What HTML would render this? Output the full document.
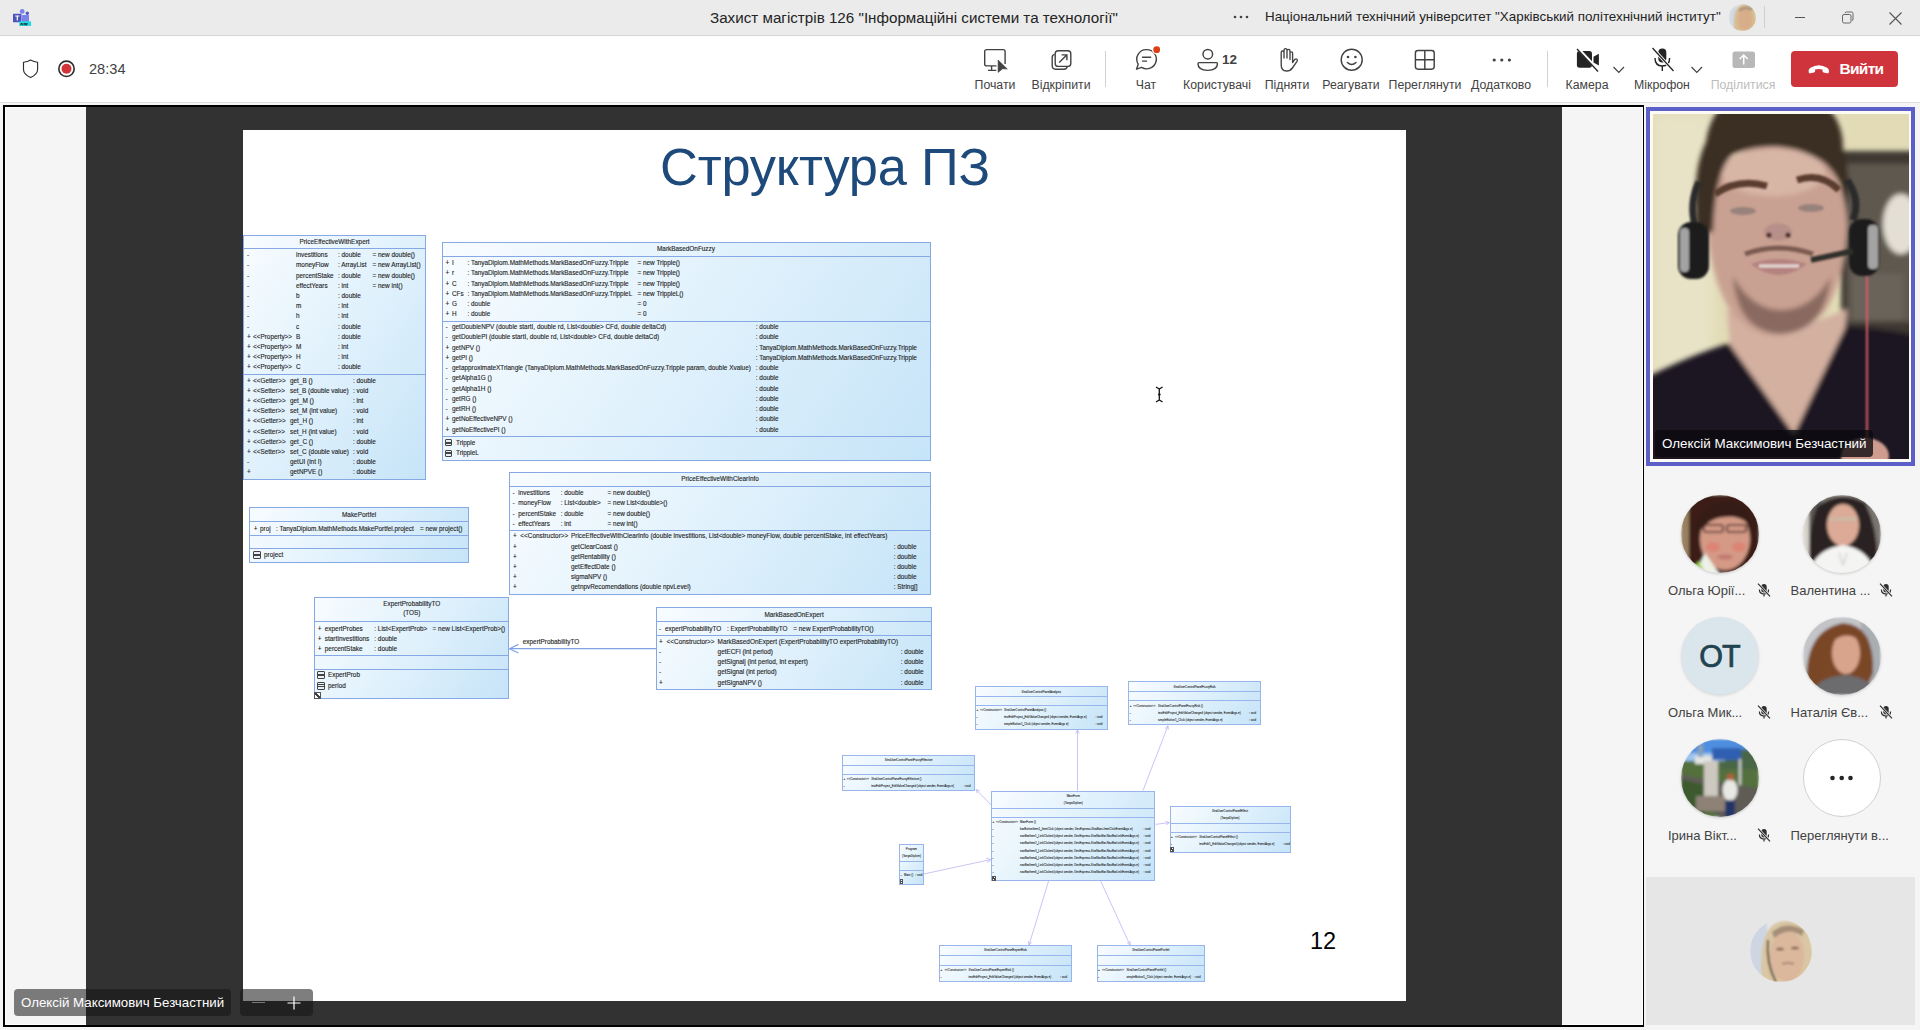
<!DOCTYPE html>
<html><head><meta charset="utf-8"><style>
*{margin:0;padding:0;box-sizing:border-box}
html,body{width:1920px;height:1030px;overflow:hidden;background:#f5f5f5;font-family:"Liberation Sans",sans-serif;position:relative}
.abs{position:absolute}
#titlebar{left:0;top:0;width:1920px;height:36px;background:#ebebeb;border-bottom:1px solid #d6d6d6}
#toolbar{left:0;top:36px;width:1920px;height:67px;background:#fff;border-bottom:1px solid #e0e0e0}
#stage{left:3px;top:105px;width:1641px;height:922px;background:#000}
#stageIn{left:5px;top:107px;width:1638px;height:918px;background:#fff}
#shareBg{left:6px;top:108px;width:1636px;height:916px;background:#f5f5f5}
#dark{left:86px;top:107px;width:1476px;height:918px;background:#323232}
#slide{left:243px;top:129.5px;width:1162.5px;height:871px;background:#fff}
.ub{position:absolute;border:1px solid #86a9e6;background:linear-gradient(125deg,#f8fcff 0%,#e2f2fc 45%,#c6e4f8 100%)}
.us{position:absolute;height:1px;background:#86a9e6}
.ut{position:absolute;white-space:nowrap;line-height:10px;height:10px;color:#1e1e1e;-webkit-text-stroke:0.12px #1e1e1e}
.sm{-webkit-text-stroke:0.07px #222;color:#222}
.ctr{text-align:center}
.nic{position:absolute;border:1px solid #444;border-radius:1px;background:linear-gradient(#444 0 0) 0 33%/100% 1px no-repeat,linear-gradient(#444 0 0) 0 66%/100% 1px no-repeat,#e8f0f6}
.shc{position:absolute;border:0.7px solid #555;background:linear-gradient(45deg,#fff 38%,#444 38%,#444 62%,#fff 62%)}
.tb{position:absolute;font-size:12.3px;color:#424242;white-space:nowrap;line-height:14px}
.lbl{position:absolute;font-size:13px;color:#424242;white-space:nowrap;line-height:16px}
</style></head><body>
<div id="titlebar" class="abs"></div>
<div id="toolbar" class="abs"></div>
<div id="stage" class="abs"></div><div id="stageIn" class="abs"></div><div id="shareBg" class="abs"></div><div id="dark" class="abs"></div><div id="slide" class="abs"></div>
<div class="abs" style="left:660px;top:138.5px;font-size:52.4px;line-height:56px;color:#1d497b;white-space:nowrap;letter-spacing:-0.2px">Структура ПЗ</div>
<div class="abs" style="left:1310px;top:928px;font-size:23.5px;line-height:26px;color:#000;white-space:nowrap">12</div>
<div class="ub" style="left:243.0px;top:234.5px;width:183.0px;height:245.5px"></div>
<div class="us" style="left:243.0px;top:247.8px;width:183.0px"></div>
<div class="us" style="left:243.0px;top:374.0px;width:183.0px"></div>
<div class="ut ctr" style="left:134.5px;top:236.5px;width:400px;font-size:6.4px">PriceEffectiveWithExpert</div>
<div class="ut" style="left:247.0px;top:250.2px;font-size:6.4px">-</div>
<div class="ut" style="left:296.0px;top:250.2px;font-size:6.4px">investitions</div>
<div class="ut" style="left:338.0px;top:250.2px;font-size:6.4px">: double</div>
<div class="ut" style="left:372.5px;top:250.2px;font-size:6.4px">= new double()</div>
<div class="ut" style="left:247.0px;top:260.4px;font-size:6.4px">-</div>
<div class="ut" style="left:296.0px;top:260.4px;font-size:6.4px">moneyFlow</div>
<div class="ut" style="left:338.0px;top:260.4px;font-size:6.4px">: ArrayList</div>
<div class="ut" style="left:372.5px;top:260.4px;font-size:6.4px">= new ArrayList()</div>
<div class="ut" style="left:247.0px;top:270.6px;font-size:6.4px">-</div>
<div class="ut" style="left:296.0px;top:270.6px;font-size:6.4px">percentStake</div>
<div class="ut" style="left:338.0px;top:270.6px;font-size:6.4px">: double</div>
<div class="ut" style="left:372.5px;top:270.6px;font-size:6.4px">= new double()</div>
<div class="ut" style="left:247.0px;top:280.8px;font-size:6.4px">-</div>
<div class="ut" style="left:296.0px;top:280.8px;font-size:6.4px">effectYears</div>
<div class="ut" style="left:338.0px;top:280.8px;font-size:6.4px">: int</div>
<div class="ut" style="left:372.5px;top:280.8px;font-size:6.4px">= new int()</div>
<div class="ut" style="left:247.0px;top:291.0px;font-size:6.4px">-</div>
<div class="ut" style="left:296.0px;top:291.0px;font-size:6.4px">b</div>
<div class="ut" style="left:338.0px;top:291.0px;font-size:6.4px">: double</div>
<div class="ut" style="left:247.0px;top:301.2px;font-size:6.4px">-</div>
<div class="ut" style="left:296.0px;top:301.2px;font-size:6.4px">m</div>
<div class="ut" style="left:338.0px;top:301.2px;font-size:6.4px">: int</div>
<div class="ut" style="left:247.0px;top:311.4px;font-size:6.4px">-</div>
<div class="ut" style="left:296.0px;top:311.4px;font-size:6.4px">h</div>
<div class="ut" style="left:338.0px;top:311.4px;font-size:6.4px">: int</div>
<div class="ut" style="left:247.0px;top:321.6px;font-size:6.4px">-</div>
<div class="ut" style="left:296.0px;top:321.6px;font-size:6.4px">c</div>
<div class="ut" style="left:338.0px;top:321.6px;font-size:6.4px">: double</div>
<div class="ut" style="left:247.0px;top:331.8px;font-size:6.4px">+</div>
<div class="ut" style="left:253.0px;top:331.8px;font-size:6.4px">&lt;&lt;Property&gt;&gt;</div>
<div class="ut" style="left:296.0px;top:331.8px;font-size:6.4px">B</div>
<div class="ut" style="left:338.0px;top:331.8px;font-size:6.4px">: double</div>
<div class="ut" style="left:247.0px;top:342.0px;font-size:6.4px">+</div>
<div class="ut" style="left:253.0px;top:342.0px;font-size:6.4px">&lt;&lt;Property&gt;&gt;</div>
<div class="ut" style="left:296.0px;top:342.0px;font-size:6.4px">M</div>
<div class="ut" style="left:338.0px;top:342.0px;font-size:6.4px">: int</div>
<div class="ut" style="left:247.0px;top:352.2px;font-size:6.4px">+</div>
<div class="ut" style="left:253.0px;top:352.2px;font-size:6.4px">&lt;&lt;Property&gt;&gt;</div>
<div class="ut" style="left:296.0px;top:352.2px;font-size:6.4px">H</div>
<div class="ut" style="left:338.0px;top:352.2px;font-size:6.4px">: int</div>
<div class="ut" style="left:247.0px;top:362.4px;font-size:6.4px">+</div>
<div class="ut" style="left:253.0px;top:362.4px;font-size:6.4px">&lt;&lt;Property&gt;&gt;</div>
<div class="ut" style="left:296.0px;top:362.4px;font-size:6.4px">C</div>
<div class="ut" style="left:338.0px;top:362.4px;font-size:6.4px">: double</div>
<div class="ut" style="left:247.0px;top:375.8px;font-size:6.4px">+</div>
<div class="ut" style="left:253.0px;top:375.8px;font-size:6.4px">&lt;&lt;Getter&gt;&gt;</div>
<div class="ut" style="left:290.0px;top:375.8px;font-size:6.4px">get_B ()</div>
<div class="ut" style="left:353.0px;top:375.8px;font-size:6.4px">: double</div>
<div class="ut" style="left:247.0px;top:385.9px;font-size:6.4px">+</div>
<div class="ut" style="left:253.0px;top:385.9px;font-size:6.4px">&lt;&lt;Setter&gt;&gt;</div>
<div class="ut" style="left:290.0px;top:385.9px;font-size:6.4px">set_B (double value)</div>
<div class="ut" style="left:353.0px;top:385.9px;font-size:6.4px">: void</div>
<div class="ut" style="left:247.0px;top:396.1px;font-size:6.4px">+</div>
<div class="ut" style="left:253.0px;top:396.1px;font-size:6.4px">&lt;&lt;Getter&gt;&gt;</div>
<div class="ut" style="left:290.0px;top:396.1px;font-size:6.4px">get_M ()</div>
<div class="ut" style="left:353.0px;top:396.1px;font-size:6.4px">: int</div>
<div class="ut" style="left:247.0px;top:406.2px;font-size:6.4px">+</div>
<div class="ut" style="left:253.0px;top:406.2px;font-size:6.4px">&lt;&lt;Setter&gt;&gt;</div>
<div class="ut" style="left:290.0px;top:406.2px;font-size:6.4px">set_M (int value)</div>
<div class="ut" style="left:353.0px;top:406.2px;font-size:6.4px">: void</div>
<div class="ut" style="left:247.0px;top:416.4px;font-size:6.4px">+</div>
<div class="ut" style="left:253.0px;top:416.4px;font-size:6.4px">&lt;&lt;Getter&gt;&gt;</div>
<div class="ut" style="left:290.0px;top:416.4px;font-size:6.4px">get_H ()</div>
<div class="ut" style="left:353.0px;top:416.4px;font-size:6.4px">: int</div>
<div class="ut" style="left:247.0px;top:426.6px;font-size:6.4px">+</div>
<div class="ut" style="left:253.0px;top:426.6px;font-size:6.4px">&lt;&lt;Setter&gt;&gt;</div>
<div class="ut" style="left:290.0px;top:426.6px;font-size:6.4px">set_H (int value)</div>
<div class="ut" style="left:353.0px;top:426.6px;font-size:6.4px">: void</div>
<div class="ut" style="left:247.0px;top:436.7px;font-size:6.4px">+</div>
<div class="ut" style="left:253.0px;top:436.7px;font-size:6.4px">&lt;&lt;Getter&gt;&gt;</div>
<div class="ut" style="left:290.0px;top:436.7px;font-size:6.4px">get_C ()</div>
<div class="ut" style="left:353.0px;top:436.7px;font-size:6.4px">: double</div>
<div class="ut" style="left:247.0px;top:446.9px;font-size:6.4px">+</div>
<div class="ut" style="left:253.0px;top:446.9px;font-size:6.4px">&lt;&lt;Setter&gt;&gt;</div>
<div class="ut" style="left:290.0px;top:446.9px;font-size:6.4px">set_C (double value)</div>
<div class="ut" style="left:353.0px;top:446.9px;font-size:6.4px">: void</div>
<div class="ut" style="left:247.0px;top:457.0px;font-size:6.4px">-</div>
<div class="ut" style="left:290.0px;top:457.0px;font-size:6.4px">getUI (int I)</div>
<div class="ut" style="left:353.0px;top:457.0px;font-size:6.4px">: double</div>
<div class="ut" style="left:247.0px;top:467.2px;font-size:6.4px">+</div>
<div class="ut" style="left:290.0px;top:467.2px;font-size:6.4px">getNPVE ()</div>
<div class="ut" style="left:353.0px;top:467.2px;font-size:6.4px">: double</div>
<div class="ub" style="left:441.5px;top:241.5px;width:489.0px;height:219.0px"></div>
<div class="us" style="left:441.5px;top:256.0px;width:489.0px"></div>
<div class="us" style="left:441.5px;top:320.5px;width:489.0px"></div>
<div class="us" style="left:441.5px;top:435.7px;width:489.0px"></div>
<div class="ut ctr" style="left:486.0px;top:243.5px;width:400px;font-size:6.4px">MarkBasedOnFuzzy</div>
<div class="ut" style="left:445.4px;top:258.0px;font-size:6.4px">+</div>
<div class="ut" style="left:452.0px;top:258.0px;font-size:6.4px">I</div>
<div class="ut" style="left:467.5px;top:258.0px;font-size:6.4px">: TanyaDiplom.MathMethods.MarkBasedOnFuzzy.Tripple</div>
<div class="ut" style="left:637.5px;top:258.0px;font-size:6.4px">= new Tripple()</div>
<div class="ut" style="left:445.4px;top:268.2px;font-size:6.4px">+</div>
<div class="ut" style="left:452.0px;top:268.2px;font-size:6.4px">r</div>
<div class="ut" style="left:467.5px;top:268.2px;font-size:6.4px">: TanyaDiplom.MathMethods.MarkBasedOnFuzzy.Tripple</div>
<div class="ut" style="left:637.5px;top:268.2px;font-size:6.4px">= new Tripple()</div>
<div class="ut" style="left:445.4px;top:278.5px;font-size:6.4px">+</div>
<div class="ut" style="left:452.0px;top:278.5px;font-size:6.4px">C</div>
<div class="ut" style="left:467.5px;top:278.5px;font-size:6.4px">: TanyaDiplom.MathMethods.MarkBasedOnFuzzy.Tripple</div>
<div class="ut" style="left:637.5px;top:278.5px;font-size:6.4px">= new Tripple()</div>
<div class="ut" style="left:445.4px;top:288.8px;font-size:6.4px">+</div>
<div class="ut" style="left:452.0px;top:288.8px;font-size:6.4px">CFs</div>
<div class="ut" style="left:467.5px;top:288.8px;font-size:6.4px">: TanyaDiplom.MathMethods.MarkBasedOnFuzzy.TrippleL</div>
<div class="ut" style="left:637.5px;top:288.8px;font-size:6.4px">= new TrippleL()</div>
<div class="ut" style="left:445.4px;top:299.0px;font-size:6.4px">+</div>
<div class="ut" style="left:452.0px;top:299.0px;font-size:6.4px">G</div>
<div class="ut" style="left:467.5px;top:299.0px;font-size:6.4px">: double</div>
<div class="ut" style="left:637.5px;top:299.0px;font-size:6.4px">= 0</div>
<div class="ut" style="left:445.4px;top:309.2px;font-size:6.4px">+</div>
<div class="ut" style="left:452.0px;top:309.2px;font-size:6.4px">H</div>
<div class="ut" style="left:467.5px;top:309.2px;font-size:6.4px">: double</div>
<div class="ut" style="left:637.5px;top:309.2px;font-size:6.4px">= 0</div>
<div class="ut" style="left:445.4px;top:322.0px;font-size:6.4px">-</div>
<div class="ut" style="left:452.0px;top:322.0px;font-size:6.4px">getDoubleNPV (double startI, double rd, List&lt;double&gt; CFd, double deltaCd)</div>
<div class="ut" style="left:755.8px;top:322.0px;font-size:6.4px">: double</div>
<div class="ut" style="left:445.4px;top:332.2px;font-size:6.4px">-</div>
<div class="ut" style="left:452.0px;top:332.2px;font-size:6.4px">getDoublePI (double startI, double rd, List&lt;double&gt; CFd, double deltaCd)</div>
<div class="ut" style="left:755.8px;top:332.2px;font-size:6.4px">: double</div>
<div class="ut" style="left:445.4px;top:342.5px;font-size:6.4px">+</div>
<div class="ut" style="left:452.0px;top:342.5px;font-size:6.4px">getNPV ()</div>
<div class="ut" style="left:755.8px;top:342.5px;font-size:6.4px">: TanyaDiplom.MathMethods.MarkBasedOnFuzzy.Tripple</div>
<div class="ut" style="left:445.4px;top:352.8px;font-size:6.4px">+</div>
<div class="ut" style="left:452.0px;top:352.8px;font-size:6.4px">getPI ()</div>
<div class="ut" style="left:755.8px;top:352.8px;font-size:6.4px">: TanyaDiplom.MathMethods.MarkBasedOnFuzzy.Tripple</div>
<div class="ut" style="left:445.4px;top:363.0px;font-size:6.4px">-</div>
<div class="ut" style="left:452.0px;top:363.0px;font-size:6.4px">getapproximateXTriangle (TanyaDiplom.MathMethods.MarkBasedOnFuzzy.Tripple param, double Xvalue)</div>
<div class="ut" style="left:755.8px;top:363.0px;font-size:6.4px">: double</div>
<div class="ut" style="left:445.4px;top:373.2px;font-size:6.4px">-</div>
<div class="ut" style="left:452.0px;top:373.2px;font-size:6.4px">getAlpha1G ()</div>
<div class="ut" style="left:755.8px;top:373.2px;font-size:6.4px">: double</div>
<div class="ut" style="left:445.4px;top:383.5px;font-size:6.4px">-</div>
<div class="ut" style="left:452.0px;top:383.5px;font-size:6.4px">getAlpha1H ()</div>
<div class="ut" style="left:755.8px;top:383.5px;font-size:6.4px">: double</div>
<div class="ut" style="left:445.4px;top:393.8px;font-size:6.4px">-</div>
<div class="ut" style="left:452.0px;top:393.8px;font-size:6.4px">getRG ()</div>
<div class="ut" style="left:755.8px;top:393.8px;font-size:6.4px">: double</div>
<div class="ut" style="left:445.4px;top:404.0px;font-size:6.4px">-</div>
<div class="ut" style="left:452.0px;top:404.0px;font-size:6.4px">getRH ()</div>
<div class="ut" style="left:755.8px;top:404.0px;font-size:6.4px">: double</div>
<div class="ut" style="left:445.4px;top:414.2px;font-size:6.4px">+</div>
<div class="ut" style="left:452.0px;top:414.2px;font-size:6.4px">getNoEffectiveNPV ()</div>
<div class="ut" style="left:755.8px;top:414.2px;font-size:6.4px">: double</div>
<div class="ut" style="left:445.4px;top:424.5px;font-size:6.4px">+</div>
<div class="ut" style="left:452.0px;top:424.5px;font-size:6.4px">getNoEffectivePI ()</div>
<div class="ut" style="left:755.8px;top:424.5px;font-size:6.4px">: double</div>
<div class="nic" style="left:445.0px;top:439.2px;width:7px;height:7px"></div>
<div class="ut" style="left:456.0px;top:437.7px;font-size:6.4px">Tripple</div>
<div class="nic" style="left:445.0px;top:449.7px;width:7px;height:7px"></div>
<div class="ut" style="left:456.0px;top:448.2px;font-size:6.4px">TrippleL</div>
<div class="ub" style="left:509.2px;top:471.6px;width:421.5px;height:123.4px"></div>
<div class="us" style="left:509.2px;top:485.9px;width:421.5px"></div>
<div class="us" style="left:509.2px;top:529.5px;width:421.5px"></div>
<div class="ut ctr" style="left:520.0px;top:474.0px;width:400px;font-size:6.4px">PriceEffectiveWithClearInfo</div>
<div class="ut" style="left:512.5px;top:488.1px;font-size:6.4px">-</div>
<div class="ut" style="left:518.3px;top:488.1px;font-size:6.4px">investitions</div>
<div class="ut" style="left:560.7px;top:488.1px;font-size:6.4px">: double</div>
<div class="ut" style="left:607.6px;top:488.1px;font-size:6.4px">= new double()</div>
<div class="ut" style="left:512.5px;top:498.3px;font-size:6.4px">-</div>
<div class="ut" style="left:518.3px;top:498.3px;font-size:6.4px">moneyFlow</div>
<div class="ut" style="left:560.7px;top:498.3px;font-size:6.4px">: List&lt;double&gt;</div>
<div class="ut" style="left:607.6px;top:498.3px;font-size:6.4px">= new List&lt;double&gt;()</div>
<div class="ut" style="left:512.5px;top:508.5px;font-size:6.4px">-</div>
<div class="ut" style="left:518.3px;top:508.5px;font-size:6.4px">percentStake</div>
<div class="ut" style="left:560.7px;top:508.5px;font-size:6.4px">: double</div>
<div class="ut" style="left:607.6px;top:508.5px;font-size:6.4px">= new double()</div>
<div class="ut" style="left:512.5px;top:518.7px;font-size:6.4px">-</div>
<div class="ut" style="left:518.3px;top:518.7px;font-size:6.4px">effectYears</div>
<div class="ut" style="left:560.7px;top:518.7px;font-size:6.4px">: int</div>
<div class="ut" style="left:607.6px;top:518.7px;font-size:6.4px">= new int()</div>
<div class="ut" style="left:513.0px;top:531.4px;font-size:6.4px">+</div>
<div class="ut" style="left:520.3px;top:531.4px;font-size:6.4px">&lt;&lt;Constructor&gt;&gt;</div>
<div class="ut" style="left:571.0px;top:531.4px;font-size:6.4px">PriceEffectiveWithClearInfo (double investitions, List&lt;double&gt; moneyFlow, double percentStake, int effectYears)</div>
<div class="ut" style="left:513.0px;top:541.6px;font-size:6.4px">+</div>
<div class="ut" style="left:571.0px;top:541.6px;font-size:6.4px">getClearCoast ()</div>
<div class="ut" style="left:893.7px;top:541.6px;font-size:6.4px">: double</div>
<div class="ut" style="left:513.0px;top:551.8px;font-size:6.4px">+</div>
<div class="ut" style="left:571.0px;top:551.8px;font-size:6.4px">getRentability ()</div>
<div class="ut" style="left:893.7px;top:551.8px;font-size:6.4px">: double</div>
<div class="ut" style="left:513.0px;top:561.9px;font-size:6.4px">+</div>
<div class="ut" style="left:571.0px;top:561.9px;font-size:6.4px">getEffectDate ()</div>
<div class="ut" style="left:893.7px;top:561.9px;font-size:6.4px">: double</div>
<div class="ut" style="left:513.0px;top:572.1px;font-size:6.4px">+</div>
<div class="ut" style="left:571.0px;top:572.1px;font-size:6.4px">sigmaNPV ()</div>
<div class="ut" style="left:893.7px;top:572.1px;font-size:6.4px">: double</div>
<div class="ut" style="left:513.0px;top:582.3px;font-size:6.4px">+</div>
<div class="ut" style="left:571.0px;top:582.3px;font-size:6.4px">getnpvRecomendations (double npvLevel)</div>
<div class="ut" style="left:893.7px;top:582.3px;font-size:6.4px">: String[]</div>
<div class="ub" style="left:249.4px;top:507.1px;width:219.3px;height:55.6px"></div>
<div class="us" style="left:249.4px;top:521.4px;width:219.3px"></div>
<div class="us" style="left:249.4px;top:534.8px;width:219.3px"></div>
<div class="us" style="left:249.4px;top:548.0px;width:219.3px"></div>
<div class="ut ctr" style="left:159.1px;top:509.5px;width:400px;font-size:6.4px">MakePortfel</div>
<div class="ut" style="left:253.8px;top:523.8px;font-size:6.4px">+</div>
<div class="ut" style="left:260.0px;top:523.8px;font-size:6.4px">proj</div>
<div class="ut" style="left:276.0px;top:523.8px;font-size:6.4px">: TanyaDiplom.MathMethods.MakePortfel.project</div>
<div class="ut" style="left:420.0px;top:523.8px;font-size:6.4px">= new project()</div>
<div class="nic" style="left:253.0px;top:551.0px;width:8px;height:8px"></div>
<div class="ut" style="left:264.0px;top:550.0px;font-size:6.4px">project</div>
<div class="ub" style="left:314.3px;top:597.0px;width:194.9px;height:102.0px"></div>
<div class="us" style="left:314.3px;top:621.2px;width:194.9px"></div>
<div class="us" style="left:314.3px;top:655.4px;width:194.9px"></div>
<div class="us" style="left:314.3px;top:668.5px;width:194.9px"></div>
<div class="ut ctr" style="left:211.8px;top:599.0px;width:400px;font-size:6.4px">ExpertProbabilityTO</div>
<div class="ut ctr" style="left:211.8px;top:608.3px;width:400px;font-size:6.4px">(TOS)</div>
<div class="ut" style="left:317.8px;top:623.5px;font-size:6.4px">+</div>
<div class="ut" style="left:324.8px;top:623.5px;font-size:6.4px">expertProbes</div>
<div class="ut" style="left:374.3px;top:623.5px;font-size:6.4px">: List&lt;ExpertProb&gt;</div>
<div class="ut" style="left:432.6px;top:623.5px;font-size:6.4px">= new List&lt;ExpertProb&gt;()</div>
<div class="ut" style="left:317.8px;top:633.7px;font-size:6.4px">+</div>
<div class="ut" style="left:324.8px;top:633.7px;font-size:6.4px">startInvestitions</div>
<div class="ut" style="left:374.3px;top:633.7px;font-size:6.4px">: double</div>
<div class="ut" style="left:317.8px;top:643.9px;font-size:6.4px">+</div>
<div class="ut" style="left:324.8px;top:643.9px;font-size:6.4px">percentStake</div>
<div class="ut" style="left:374.3px;top:643.9px;font-size:6.4px">: double</div>
<div class="nic" style="left:317.0px;top:671.0px;width:8px;height:8px"></div>
<div class="ut" style="left:328.0px;top:670.0px;font-size:6.4px">ExpertProb</div>
<div class="nic" style="left:317.0px;top:681.5px;width:8px;height:8px"></div>
<div class="ut" style="left:328.0px;top:680.5px;font-size:6.4px">period</div>
<div class="shc" style="left:314px;top:692px;width:7px;height:7px"></div>
<div class="ub" style="left:656.3px;top:607.4px;width:275.7px;height:83.1px"></div>
<div class="us" style="left:656.3px;top:621.3px;width:275.7px"></div>
<div class="us" style="left:656.3px;top:635.2px;width:275.7px"></div>
<div class="ut ctr" style="left:594.1px;top:609.5px;width:400px;font-size:6.4px">MarkBasedOnExpert</div>
<div class="ut" style="left:659.0px;top:623.6px;font-size:6.4px">-</div>
<div class="ut" style="left:664.9px;top:623.6px;font-size:6.4px">expertProbabilityTO</div>
<div class="ut" style="left:726.9px;top:623.6px;font-size:6.4px">: ExpertProbabilityTO</div>
<div class="ut" style="left:793.3px;top:623.6px;font-size:6.4px">= new ExpertProbabilityTO()</div>
<div class="ut" style="left:659.0px;top:636.9px;font-size:6.4px">+</div>
<div class="ut" style="left:666.6px;top:636.9px;font-size:6.4px">&lt;&lt;Constructor&gt;&gt;</div>
<div class="ut" style="left:717.6px;top:636.9px;font-size:6.4px">MarkBasedOnExpert (ExpertProbabilityTO expertProbabilityTO)</div>
<div class="ut" style="left:659.0px;top:647.1px;font-size:6.4px">-</div>
<div class="ut" style="left:717.6px;top:647.1px;font-size:6.4px">getECFi (int period)</div>
<div class="ut" style="left:900.8px;top:647.1px;font-size:6.4px">: double</div>
<div class="ut" style="left:659.0px;top:657.2px;font-size:6.4px">-</div>
<div class="ut" style="left:717.6px;top:657.2px;font-size:6.4px">getSignaij (int period, int expert)</div>
<div class="ut" style="left:900.8px;top:657.2px;font-size:6.4px">: double</div>
<div class="ut" style="left:659.0px;top:667.4px;font-size:6.4px">-</div>
<div class="ut" style="left:717.6px;top:667.4px;font-size:6.4px">getSignal (int period)</div>
<div class="ut" style="left:900.8px;top:667.4px;font-size:6.4px">: double</div>
<div class="ut" style="left:659.0px;top:677.6px;font-size:6.4px">+</div>
<div class="ut" style="left:717.6px;top:677.6px;font-size:6.4px">getSignaNPV ()</div>
<div class="ut" style="left:900.8px;top:677.6px;font-size:6.4px">: double</div>
<div class="ut" style="left:522.8px;top:637.4px;font-size:6.4px">expertProbabilityTO</div>
<div class="ub" style="left:975.0px;top:686.2px;width:132.5px;height:43.4px;border-color:#98b6ec"></div>
<div class="us" style="left:975.0px;top:696.2px;width:132.5px;background:#98b6ec"></div>
<div class="us" style="left:975.0px;top:705.3px;width:132.5px;background:#98b6ec"></div>
<div class="ut ctr sm" style="left:841.2px;top:686.5px;width:400px;font-size:2.95px">XtraUserControlPanelAnalysis</div>
<div class="ut sm" style="left:976.5px;top:705.0px;font-size:2.95px">+</div>
<div class="ut sm" style="left:980.0px;top:705.0px;font-size:2.95px">&lt;&lt;Constructor&gt;&gt;</div>
<div class="ut sm" style="left:1004.0px;top:705.0px;font-size:2.95px">XtraUserControlPanelAnalysis ()</div>
<div class="ut sm" style="left:976.5px;top:712.2px;font-size:2.95px">-</div>
<div class="ut sm" style="left:1004.0px;top:712.2px;font-size:2.95px">textEditProject_EditValueChanged (object sender, EventArgs e)</div>
<div class="ut sm" style="left:1095.4px;top:712.2px;font-size:2.95px">: void</div>
<div class="ut sm" style="left:976.5px;top:719.4px;font-size:2.95px">-</div>
<div class="ut sm" style="left:1004.0px;top:719.4px;font-size:2.95px">simpleButton1_Click (object sender, EventArgs e)</div>
<div class="ut sm" style="left:1095.4px;top:719.4px;font-size:2.95px">: void</div>
<div class="ub" style="left:1128.3px;top:681.2px;width:132.5px;height:44.1px;border-color:#98b6ec"></div>
<div class="us" style="left:1128.3px;top:691.2px;width:132.5px;background:#98b6ec"></div>
<div class="us" style="left:1128.3px;top:700.3px;width:132.5px;background:#98b6ec"></div>
<div class="ut ctr sm" style="left:994.5px;top:681.5px;width:400px;font-size:2.95px">XtraUserControlPanelFuzzyRisk</div>
<div class="ut sm" style="left:1129.8px;top:700.5px;font-size:2.95px">+</div>
<div class="ut sm" style="left:1133.3px;top:700.5px;font-size:2.95px">&lt;&lt;Constructor&gt;&gt;</div>
<div class="ut sm" style="left:1158.0px;top:700.5px;font-size:2.95px">XtraUserControlPanelFuzzyRisk ()</div>
<div class="ut sm" style="left:1129.8px;top:707.8px;font-size:2.95px">-</div>
<div class="ut sm" style="left:1158.0px;top:707.8px;font-size:2.95px">textEditProject_EditValueChanged (object sender, EventArgs e)</div>
<div class="ut sm" style="left:1249.0px;top:707.8px;font-size:2.95px">: void</div>
<div class="ut sm" style="left:1129.8px;top:715.0px;font-size:2.95px">-</div>
<div class="ut sm" style="left:1158.0px;top:715.0px;font-size:2.95px">simpleButton1_Click (object sender, EventArgs e)</div>
<div class="ut sm" style="left:1249.0px;top:715.0px;font-size:2.95px">: void</div>
<div class="ub" style="left:842.0px;top:754.7px;width:133.3px;height:36.3px;border-color:#98b6ec"></div>
<div class="us" style="left:842.0px;top:764.9px;width:133.3px;background:#98b6ec"></div>
<div class="us" style="left:842.0px;top:773.9px;width:133.3px;background:#98b6ec"></div>
<div class="ut ctr sm" style="left:708.6px;top:755.0px;width:400px;font-size:2.95px">XtraUserControlPanelFuzzyEffective</div>
<div class="ut sm" style="left:843.5px;top:773.5px;font-size:2.95px">+</div>
<div class="ut sm" style="left:846.8px;top:773.5px;font-size:2.95px">&lt;&lt;Constructor&gt;&gt;</div>
<div class="ut sm" style="left:871.2px;top:773.5px;font-size:2.95px">XtraUserControlPanelFuzzyEffective ()</div>
<div class="ut sm" style="left:843.5px;top:781.0px;font-size:2.95px">-</div>
<div class="ut sm" style="left:871.2px;top:781.0px;font-size:2.95px">textEditProject_EditValueChanged (object sender, EventArgs e)</div>
<div class="ut sm" style="left:963.7px;top:781.0px;font-size:2.95px">: void</div>
<div class="ub" style="left:991.2px;top:790.7px;width:164.3px;height:90.3px;border-color:#98b6ec"></div>
<div class="us" style="left:991.2px;top:807.8px;width:164.3px;background:#98b6ec"></div>
<div class="us" style="left:991.2px;top:817.1px;width:164.3px;background:#98b6ec"></div>
<div class="ut ctr sm" style="left:873.3px;top:791.0px;width:400px;font-size:2.95px">MainForm</div>
<div class="ut ctr sm" style="left:873.3px;top:798.0px;width:400px;font-size:2.95px">(TanyaDiplom)</div>
<div class="ut sm" style="left:992.5px;top:817.2px;font-size:2.95px">+</div>
<div class="ut sm" style="left:996.0px;top:817.2px;font-size:2.95px">&lt;&lt;Constructor&gt;&gt;</div>
<div class="ut sm" style="left:1020.0px;top:817.2px;font-size:2.95px">MainForm ()</div>
<div class="ut sm" style="left:992.5px;top:824.3px;font-size:2.95px">-</div>
<div class="ut sm" style="left:1020.0px;top:824.3px;font-size:2.95px">barButtonItem1_ItemClick (object sender, DevExpress.XtraBars.ItemClickEventArgs e)</div>
<div class="ut sm" style="left:1143.4px;top:824.3px;font-size:2.95px">: void</div>
<div class="ut sm" style="left:992.5px;top:831.4px;font-size:2.95px">-</div>
<div class="ut sm" style="left:1020.0px;top:831.4px;font-size:2.95px">navBarItem1_LinkClicked (object sender, DevExpress.XtraNavBar.NavBarLinkEventArgs e)</div>
<div class="ut sm" style="left:1143.4px;top:831.4px;font-size:2.95px">: void</div>
<div class="ut sm" style="left:992.5px;top:838.4px;font-size:2.95px">-</div>
<div class="ut sm" style="left:1020.0px;top:838.4px;font-size:2.95px">navBarItem2_LinkClicked (object sender, DevExpress.XtraNavBar.NavBarLinkEventArgs e)</div>
<div class="ut sm" style="left:1143.4px;top:838.4px;font-size:2.95px">: void</div>
<div class="ut sm" style="left:992.5px;top:845.5px;font-size:2.95px">-</div>
<div class="ut sm" style="left:1020.0px;top:845.5px;font-size:2.95px">navBarItem3_LinkClicked (object sender, DevExpress.XtraNavBar.NavBarLinkEventArgs e)</div>
<div class="ut sm" style="left:1143.4px;top:845.5px;font-size:2.95px">: void</div>
<div class="ut sm" style="left:992.5px;top:852.6px;font-size:2.95px">-</div>
<div class="ut sm" style="left:1020.0px;top:852.6px;font-size:2.95px">navBarItem4_LinkClicked (object sender, DevExpress.XtraNavBar.NavBarLinkEventArgs e)</div>
<div class="ut sm" style="left:1143.4px;top:852.6px;font-size:2.95px">: void</div>
<div class="ut sm" style="left:992.5px;top:859.7px;font-size:2.95px">-</div>
<div class="ut sm" style="left:1020.0px;top:859.7px;font-size:2.95px">navBarItem5_LinkClicked (object sender, DevExpress.XtraNavBar.NavBarLinkEventArgs e)</div>
<div class="ut sm" style="left:1143.4px;top:859.7px;font-size:2.95px">: void</div>
<div class="ut sm" style="left:992.5px;top:866.8px;font-size:2.95px">-</div>
<div class="ut sm" style="left:1020.0px;top:866.8px;font-size:2.95px">navBarItem6_LinkClicked (object sender, DevExpress.XtraNavBar.NavBarLinkEventArgs e)</div>
<div class="ut sm" style="left:1143.4px;top:866.8px;font-size:2.95px">: void</div>
<div class="ub" style="left:1169.5px;top:806.3px;width:121.1px;height:46.9px;border-color:#98b6ec"></div>
<div class="us" style="left:1169.5px;top:823.0px;width:121.1px;background:#98b6ec"></div>
<div class="us" style="left:1169.5px;top:832.0px;width:121.1px;background:#98b6ec"></div>
<div class="ut ctr sm" style="left:1030.0px;top:806.0px;width:400px;font-size:2.95px">XtraUserControlPanelEffect</div>
<div class="ut ctr sm" style="left:1030.0px;top:812.5px;width:400px;font-size:2.95px">(TanyaDiplom)</div>
<div class="ut sm" style="left:1171.0px;top:832.2px;font-size:2.95px">+</div>
<div class="ut sm" style="left:1175.0px;top:832.2px;font-size:2.95px">&lt;&lt;Constructor&gt;&gt;</div>
<div class="ut sm" style="left:1199.2px;top:832.2px;font-size:2.95px">XtraUserControlPanelEffect ()</div>
<div class="ut sm" style="left:1171.0px;top:839.3px;font-size:2.95px">-</div>
<div class="ut sm" style="left:1199.2px;top:839.3px;font-size:2.95px">textEdit1_EditValueChanged (object sender, EventArgs e)</div>
<div class="ut sm" style="left:1282.8px;top:839.3px;font-size:2.95px">: void</div>
<div class="ub" style="left:899.0px;top:844.0px;width:24.7px;height:40.5px;border-color:#98b6ec"></div>
<div class="us" style="left:899.0px;top:860.8px;width:24.7px;background:#98b6ec"></div>
<div class="us" style="left:899.0px;top:869.8px;width:24.7px;background:#98b6ec"></div>
<div class="ut ctr sm" style="left:711.4px;top:843.7px;width:400px;font-size:2.95px">Program</div>
<div class="ut ctr sm" style="left:711.4px;top:850.7px;width:400px;font-size:2.95px">(TanyaDiplom)</div>
<div class="ut sm" style="left:900.5px;top:870.2px;font-size:2.95px">-</div>
<div class="ut sm" style="left:904.0px;top:870.2px;font-size:2.95px">Main ()</div>
<div class="ut sm" style="left:915.3px;top:870.2px;font-size:2.95px">: void</div>
<div class="ub" style="left:939.0px;top:945.4px;width:132.7px;height:37.0px;border-color:#98b6ec"></div>
<div class="us" style="left:939.0px;top:955.0px;width:132.7px;background:#98b6ec"></div>
<div class="us" style="left:939.0px;top:964.8px;width:132.7px;background:#98b6ec"></div>
<div class="ut ctr sm" style="left:805.4px;top:945.0px;width:400px;font-size:2.95px">XtraUserControlPanelExpertRisk</div>
<div class="ut sm" style="left:940.5px;top:964.6px;font-size:2.95px">+</div>
<div class="ut sm" style="left:944.4px;top:964.6px;font-size:2.95px">&lt;&lt;Constructor&gt;&gt;</div>
<div class="ut sm" style="left:968.5px;top:964.6px;font-size:2.95px">XtraUserControlPanelExpertRisk ()</div>
<div class="ut sm" style="left:940.5px;top:971.7px;font-size:2.95px">-</div>
<div class="ut sm" style="left:968.5px;top:971.7px;font-size:2.95px">textEditProject_EditValueChanged (object sender, EventArgs e)</div>
<div class="ut sm" style="left:1060.0px;top:971.7px;font-size:2.95px">: void</div>
<div class="ub" style="left:1096.6px;top:945.4px;width:108.4px;height:37.0px;border-color:#98b6ec"></div>
<div class="us" style="left:1096.6px;top:955.0px;width:108.4px;background:#98b6ec"></div>
<div class="us" style="left:1096.6px;top:964.8px;width:108.4px;background:#98b6ec"></div>
<div class="ut ctr sm" style="left:950.8px;top:945.0px;width:400px;font-size:2.95px">XtraUserControlPanelPortfel</div>
<div class="ut sm" style="left:1098.0px;top:964.6px;font-size:2.95px">+</div>
<div class="ut sm" style="left:1102.0px;top:964.6px;font-size:2.95px">&lt;&lt;Constructor&gt;&gt;</div>
<div class="ut sm" style="left:1126.4px;top:964.6px;font-size:2.95px">XtraUserControlPanelPortfel ()</div>
<div class="ut sm" style="left:1098.0px;top:971.7px;font-size:2.95px">-</div>
<div class="ut sm" style="left:1126.4px;top:971.7px;font-size:2.95px">simpleButton1_Click (object sender, EventArgs e)</div>
<div class="ut sm" style="left:1193.6px;top:971.7px;font-size:2.95px">: void</div>
<div class="shc" style="left:991.5px;top:876px;width:4px;height:5px"></div>
<div class="shc" style="left:899.5px;top:879px;width:3.5px;height:5px"></div>
<div class="shc" style="left:1170px;top:847px;width:3.5px;height:5px"></div>
<svg class="abs" style="left:0;top:0" width="1920" height="1030"><line x1="656.3" y1="648.7" x2="509.5" y2="648.7" stroke="#7ea3e6" stroke-width="1.2"/><line x1="509.5" y1="648.7" x2="518.50" y2="653.05" stroke="#7ea3e6" stroke-width="1.2"/><line x1="509.5" y1="648.7" x2="518.50" y2="644.35" stroke="#7ea3e6" stroke-width="1.2"/><line x1="1077.5" y1="790.7" x2="1077.5" y2="730" stroke="#bcb4f4" stroke-width="0.8"/><line x1="1077.5" y1="730" x2="1075.76" y2="733.60" stroke="#bcb4f4" stroke-width="0.8"/><line x1="1077.5" y1="730" x2="1079.24" y2="733.60" stroke="#bcb4f4" stroke-width="0.8"/><line x1="1142.9" y1="790.7" x2="1168" y2="725.8" stroke="#bcb4f4" stroke-width="0.8"/><line x1="1168" y1="725.8" x2="1165.08" y2="728.53" stroke="#bcb4f4" stroke-width="0.8"/><line x1="1168" y1="725.8" x2="1168.32" y2="729.79" stroke="#bcb4f4" stroke-width="0.8"/><line x1="991.2" y1="805" x2="976" y2="789.5" stroke="#bcb4f4" stroke-width="0.8"/><line x1="976" y1="789.5" x2="977.28" y2="793.29" stroke="#bcb4f4" stroke-width="0.8"/><line x1="976" y1="789.5" x2="979.76" y2="790.85" stroke="#bcb4f4" stroke-width="0.8"/><line x1="923.7" y1="874" x2="991" y2="859.5" stroke="#bcb4f4" stroke-width="0.8"/><line x1="991" y1="859.5" x2="986.14" y2="858.32" stroke="#bcb4f4" stroke-width="0.8"/><line x1="991" y1="859.5" x2="987.06" y2="862.57" stroke="#bcb4f4" stroke-width="0.8"/><line x1="1155.5" y1="824.4" x2="1169.3" y2="822.6" stroke="#bcb4f4" stroke-width="0.8"/><line x1="1169.3" y1="822.6" x2="1165.50" y2="821.34" stroke="#bcb4f4" stroke-width="0.8"/><line x1="1169.3" y1="822.6" x2="1165.95" y2="824.79" stroke="#bcb4f4" stroke-width="0.8"/><line x1="1048.6" y1="881" x2="1029" y2="945" stroke="#bcb4f4" stroke-width="0.8"/><line x1="1029" y1="945" x2="1031.72" y2="942.07" stroke="#bcb4f4" stroke-width="0.8"/><line x1="1029" y1="945" x2="1028.39" y2="941.05" stroke="#bcb4f4" stroke-width="0.8"/><line x1="1100.7" y1="881" x2="1130" y2="945" stroke="#bcb4f4" stroke-width="0.8"/><line x1="1130" y1="945" x2="1130.08" y2="941.00" stroke="#bcb4f4" stroke-width="0.8"/><line x1="1130" y1="945" x2="1126.92" y2="942.45" stroke="#bcb4f4" stroke-width="0.8"/></svg>
<svg class="abs" style="left:1150px;top:383px" width="20" height="24"><path d="M6 4 L9.3 6 L12.6 4 M9.3 6 V17 M6 19 L9.3 17 L12.6 19 M8 11.5 H10.6" stroke="#111" stroke-width="1.3" fill="none"/></svg>
<svg class="abs" style="left:12px;top:9px" width="22" height="20" viewBox="0 0 22 20">
<circle cx="10.2" cy="2.4" r="2.4" fill="#7b83eb"/><circle cx="15.3" cy="4.2" r="1.7" fill="#5059c9"/>
<rect x="10" y="6" width="7" height="8.5" rx="0.5" fill="#7b83eb"/>
<rect x="1" y="4.8" width="8.5" height="8.5" rx="0.6" fill="#4b53bc"/>
<path d="M3.2 7 H7.4 M5.3 7 V11.6" stroke="#fff" stroke-width="1.2"/>
<rect x="7.3" y="12.2" width="11.8" height="4.8" rx="0.8" fill="#27d9e2"/>
<path d="M8.5 16.2 L9.3 14 L10.2 16.2 M11 14 V16.2 M12.3 14 L13 16.2 L13.9 14 L14.6 16.2 L15.4 14" stroke="#111" stroke-width="0.7" fill="none"/>
</svg>
<div class="abs" style="left:710px;top:8px;font-size:15.2px;line-height:19px;color:#242424;white-space:nowrap">Захист магістрів 126 "Інформаційні системи та технології"</div>
<svg class="abs" style="left:1233px;top:14px" width="18" height="6"><circle cx="2" cy="3" r="1.3" fill="#424242"/><circle cx="8" cy="3" r="1.3" fill="#424242"/><circle cx="14" cy="3" r="1.3" fill="#424242"/></svg>
<div class="abs" style="left:1265px;top:8px;font-size:13.4px;line-height:18px;color:#242424;white-space:nowrap">Національний технічний університет "Харківський політехнічний інститут"</div>
<div class="abs" style="left:1728.5px;top:4px;width:27px;height:27px;border-radius:50%;overflow:hidden;background:#e6e6e6">
<svg width="27" height="27" viewBox="0 0 62 62"><defs><filter id="fb1"><feGaussianBlur stdDeviation="2"/></filter></defs>
<g filter="url(#fb1)"><rect width="62" height="62" fill="#e4e6ea"/><rect x="0" y="0" width="17" height="62" fill="#d2dae4"/><path d="M12 62 Q8 16 24 4 Q40 -4 56 8 Q66 30 62 62 Z" fill="#d6be8e"/><ellipse cx="37" cy="36" rx="17" ry="26" fill="#d8ae8a"/><path d="M22 12 Q36 0 54 10 L52 16 Q38 6 24 18 Z" fill="#a48e78"/></g></svg></div>
<div class="abs" style="left:1764px;top:6px;width:1px;height:22px;background:#d0d0d0"></div>
<div class="abs" style="left:1794.5px;top:17px;width:10.5px;height:1px;background:#555"></div>
<svg class="abs" style="left:1840px;top:10px" width="16" height="16"><rect x="2.5" y="4.5" width="8.5" height="8.5" rx="1.6" stroke="#666" stroke-width="1" fill="none"/><path d="M5 3.2 Q5 2 6.5 2 H11.5 Q13 2 13 3.5 V9 Q13 10.5 12 10.6" stroke="#666" stroke-width="1" fill="none"/></svg>
<svg class="abs" style="left:1888px;top:11px" width="15" height="15"><path d="M1.5 1.5 L13.5 13.5 M13.5 1.5 L1.5 13.5" stroke="#555" stroke-width="1.1"/></svg>
<svg class="abs" style="left:22px;top:59px" width="18" height="20"><path d="M1.5 3.2 Q5.5 2.8 8.6 1 Q11.7 2.8 15.6 3.2 V10.5 Q15.6 15.2 8.6 18.6 Q1.5 15.2 1.5 10.5 Z" stroke="#2f2f2f" stroke-width="1.15" fill="none" stroke-linejoin="round"/></svg>
<svg class="abs" style="left:57px;top:59px" width="20" height="20"><circle cx="9.5" cy="9.8" r="7.7" stroke="#2d2d2d" stroke-width="1.6" fill="none"/><circle cx="9.5" cy="9.8" r="5" fill="#d13438"/></svg>
<div class="abs" style="left:89px;top:60px;font-size:14.6px;line-height:18px;color:#424242;white-space:nowrap">28:34</div>
<svg class="abs" style="left:981px;top:47px" width="28" height="28" viewBox="0 0 28 28">
<path d="M15.5 18.9 H5.7 Q3.7 18.9 3.7 16.9 V4.6 Q3.7 2.6 5.7 2.6 H22.1 Q24.1 2.6 24.1 4.6 V17" stroke="#424242" stroke-width="1.4" fill="none"/>
<path d="M7 23.4 H15.3 M10.6 18.9 V23.4" stroke="#424242" stroke-width="1.4"/>
<path d="M17.1 13 L26.3 22 L21.6 21.8 L17.1 25.4 Z" fill="#424242" stroke="#424242" stroke-width="0.6" stroke-linejoin="round"/>
</svg>
<div class="tb" style="left:935px;top:78px;width:120px;text-align:center;color:#424242">Почати</div>
<svg class="abs" style="left:1050px;top:48px" width="24" height="24" viewBox="0 0 24 24">
<path d="M4.6 6.4 Q2.2 7 2.2 9.5 V17.8 Q2.2 21.2 5.6 21.2 H14 Q16.5 21.2 17.2 18.8" stroke="#424242" stroke-width="1.4" fill="none"/>
<rect x="5.2" y="2.8" width="15.6" height="15.6" rx="3" stroke="#424242" stroke-width="1.4" fill="none"/>
<path d="M9.2 14.6 L16.7 7.1 M11.6 6.9 H16.9 V12.2" stroke="#424242" stroke-width="1.4" fill="none"/>
</svg>
<div class="tb" style="left:1001px;top:78px;width:120px;text-align:center;color:#424242">Відкріпити</div>
<div class="abs" style="left:1105px;top:51px;width:1px;height:36px;background:#d1d1d1"></div>
<svg class="abs" style="left:1133px;top:46px" width="28" height="28" viewBox="0 0 28 28">
<path d="M13.6 3.6 A9.6 9.6 0 1 1 8.6 21.3 L3.5 23.2 L5.2 18.2 A9.6 9.6 0 0 1 13.6 3.6 Z" stroke="#424242" stroke-width="1.4" fill="none" stroke-linejoin="round"/>
<path d="M9 11.2 H18.2 M9 15.1 H14" stroke="#424242" stroke-width="1.4"/>
<circle cx="23.7" cy="3.7" r="4.8" fill="#fff"/><circle cx="23.7" cy="3.7" r="3.4" fill="#dc3e15"/>
</svg>
<div class="tb" style="left:1086px;top:78px;width:120px;text-align:center;color:#424242">Чат</div>
<svg class="abs" style="left:1196px;top:47px" width="24" height="26" viewBox="0 0 24 26">
<circle cx="11.8" cy="7.2" r="4.8" stroke="#424242" stroke-width="1.45" fill="none"/>
<path d="M2.9 15.6 H20.6 Q21.4 15.6 21.4 17 Q21.4 23 11.7 23.4 Q2 23 2 17 Q2 15.6 2.9 15.6 Z" stroke="#424242" stroke-width="1.45" fill="none"/>
</svg>
<div class="abs" style="left:1222px;top:52px;font-size:13.5px;font-weight:bold;line-height:16px;color:#424242">12</div>
<div class="tb" style="left:1157px;top:78px;width:120px;text-align:center;color:#424242">Користувачі</div>
<svg class="abs" style="left:1274.5px;top:47px" width="24" height="26" viewBox="0 0 24 26">
<path d="M6.2 13.5 V5.6 Q6.2 4 7.6 4 Q9 4 9 5.6 V11 V3.3 Q9 1.6 10.5 1.6 Q12 1.6 12 3.3 V11 V3.9 Q12 2.3 13.5 2.3 Q15 2.3 15 3.9 V12.5 V6.3 Q15 4.9 16.3 4.9 Q17.6 4.9 17.6 6.3 V15.5 L19.6 12.7 Q20.8 11.4 21.9 12.2 Q22.8 13 22 14.3 L17.4 21 Q15.3 24 11.6 24 Q6.2 24 6.2 18 Z" stroke="#424242" stroke-width="1.35" fill="none" stroke-linejoin="round"/>
</svg>
<div class="tb" style="left:1227px;top:78px;width:120px;text-align:center;color:#424242">Підняти</div>
<svg class="abs" style="left:1339px;top:47px" width="26" height="26" viewBox="0 0 26 26">
<circle cx="12.7" cy="12.7" r="10.5" stroke="#424242" stroke-width="1.45" fill="none"/>
<circle cx="9" cy="10" r="1.3" fill="#424242"/><circle cx="16.4" cy="10" r="1.3" fill="#424242"/>
<path d="M8.4 15.4 Q12.7 19.5 17 15.4" stroke="#424242" stroke-width="1.45" fill="none" stroke-linecap="round"/>
</svg>
<div class="tb" style="left:1291px;top:78px;width:120px;text-align:center;color:#424242">Реагувати</div>
<svg class="abs" style="left:1413px;top:48px" width="24" height="24" viewBox="0 0 24 24">
<rect x="2.4" y="2.4" width="18.8" height="18.8" rx="2.6" stroke="#424242" stroke-width="1.45" fill="none"/>
<path d="M11.8 2.4 V21.2 M2.4 11.8 H21.2" stroke="#424242" stroke-width="1.45"/>
</svg>
<div class="tb" style="left:1365px;top:78px;width:120px;text-align:center;color:#424242">Переглянути</div>
<svg class="abs" style="left:1490px;top:55px" width="24" height="10"><circle cx="4.2" cy="5" r="1.6" fill="#424242"/><circle cx="11.8" cy="5" r="1.6" fill="#424242"/><circle cx="19.4" cy="5" r="1.6" fill="#424242"/></svg>
<div class="tb" style="left:1441px;top:78px;width:120px;text-align:center;color:#424242">Додатково</div>
<div class="abs" style="left:1547px;top:51px;width:1px;height:36px;background:#d1d1d1"></div>
<svg class="abs" style="left:1574px;top:46px" width="28" height="28" viewBox="0 0 28 28">
<path d="M2.9 7.8 Q2.9 5.1 5.6 5.1 H15.3 Q18 5.1 18 7.8 V19 Q18 21.8 15.3 21.8 H5.6 Q2.9 21.8 2.9 19 Z" fill="#242424"/>
<path d="M19.5 10.8 L24.9 7.7 V19.6 L19.5 16.6 Z" fill="#242424"/>
<path d="M3.8 2.3 L24.8 24.8" stroke="#fff" stroke-width="3"/>
<path d="M3 3 L24 25.5" stroke="#242424" stroke-width="1.3"/>
</svg>
<svg class="abs" style="left:1612px;top:65px" width="14" height="10"><path d="M1.5 2 L6.8 7.3 L12 2" stroke="#424242" stroke-width="1.2" fill="none"/></svg>
<div class="tb" style="left:1527px;top:78px;width:120px;text-align:center;color:#424242">Камера</div>
<svg class="abs" style="left:1650px;top:46px" width="28" height="28" viewBox="0 0 28 28">
<rect x="8.3" y="2.5" width="8" height="14" rx="4" fill="#242424"/>
<path d="M5 12 Q5 20 12.3 20 Q19.6 20 19.6 12" stroke="#242424" stroke-width="1.4" fill="none"/>
<path d="M12.3 20 V25" stroke="#242424" stroke-width="1.4"/>
<path d="M2.5 2 L23.5 25" stroke="#fff" stroke-width="3.2"/>
<path d="M2.5 2 L23.5 25" stroke="#242424" stroke-width="1.3"/>
</svg>
<svg class="abs" style="left:1690px;top:65px" width="14" height="10"><path d="M1.5 2 L6.8 7.3 L12 2" stroke="#424242" stroke-width="1.2" fill="none"/></svg>
<div class="tb" style="left:1602px;top:78px;width:120px;text-align:center;color:#424242">Мікрофон</div>
<svg class="abs" style="left:1731px;top:50px" width="26" height="20"><rect x="1.5" y="1.5" width="22.5" height="16.5" rx="2.5" fill="#b8b8b8"/><path d="M12.7 14.5 V5 M8.7 9 L12.7 5 L16.7 9" stroke="#fff" stroke-width="1.5" fill="none"/></svg>
<div class="tb" style="left:1683px;top:78px;width:120px;text-align:center;color:#bdbdbd">Поділитися</div>
<div class="abs" style="left:1790.8px;top:51px;width:107.2px;height:36px;background:#cf343c;border-radius:4px"></div>
<svg class="abs" style="left:1806px;top:61px" width="26" height="16"><path d="M2.8 11.4 Q2 8.5 4.5 6.7 Q8.6 4.2 12.8 4.2 Q17 4.2 21.1 6.7 Q23.6 8.5 22.8 11.4 Q22.4 12.6 21 12.3 L17.6 11.6 Q16.5 11.3 16.5 10.1 V8.6 Q14.8 8 12.8 8 Q10.8 8 9.1 8.6 V10.1 Q9.1 11.3 8 11.6 L4.6 12.3 Q3.2 12.6 2.8 11.4 Z" fill="#fff"/></svg>
<div class="abs" style="left:1839.5px;top:60px;font-size:15.5px;font-weight:bold;line-height:18px;color:#fff;white-space:nowrap;letter-spacing:-0.7px">Вийти</div>
<div class="abs" style="left:14px;top:989px;width:217px;height:27px;border-radius:4px;background:rgba(20,20,20,0.55)"></div>
<div class="abs" style="left:21px;top:994px;font-size:13.3px;line-height:18px;color:#fff;white-space:nowrap;letter-spacing:0px">Олексій Максимович Безчастний</div>
<div class="abs" style="left:240px;top:989px;width:73px;height:27px;border-radius:4px;background:rgba(20,20,20,0.55)"></div>
<div class="abs" style="left:252px;top:1002px;width:13px;height:1.2px;background:#777"></div>
<svg class="abs" style="left:286px;top:995px" width="16" height="16"><path d="M8 1.5 V14.5 M1.5 8 H14.5" stroke="#fff" stroke-width="1.2"/></svg>
<div class="abs" style="left:1646px;top:107px;width:269px;height:359px;border:4px solid #5b5fc7;background:#fbfbf4"></div>
<svg class="abs" style="left:1653px;top:114px" width="256" height="345" viewBox="0 0 256 345">
<defs><filter id="bl3" x="-20%" y="-20%" width="140%" height="140%"><feGaussianBlur stdDeviation="2.5"/></filter>
<filter id="bl2" x="-20%" y="-20%" width="140%" height="140%"><feGaussianBlur stdDeviation="1.3"/></filter>
<filter id="bl6" x="-50%" y="-50%" width="200%" height="200%"><feGaussianBlur stdDeviation="6"/></filter></defs>
<rect width="256" height="345" fill="#e2dbb6"/>
<g filter="url(#bl6)"><rect x="0" y="0" width="60" height="345" fill="#e8e3c6"/><rect x="60" y="0" width="130" height="30" fill="#e6e0c0"/></g>
<g filter="url(#bl3)">
<!-- picture frame -->
<rect x="188" y="37" width="75" height="185" fill="#3c3831"/>
<rect x="194" y="50" width="70" height="158" fill="#5e594f"/>
<ellipse cx="248" cy="110" rx="18" ry="30" fill="#e4dfd4"/><rect x="200" y="160" width="50" height="45" fill="#6a645a"/>
<!-- shirt -->
<path d="M-10 265 Q40 240 77 229 L141 320 L191 212 Q230 214 266 222 V355 H-10 Z" fill="#1a1822"/>
<!-- neck -->
<path d="M74 195 Q130 225 194 195 L192 214 L141 320 L77 231 Z" fill="#d3b0a0"/>
<!-- face -->
<path d="M54 110 Q52 40 120 28 Q190 30 194 110 Q192 170 170 200 Q140 222 122 222 Q100 222 80 200 Q58 170 54 110 Z" fill="#c9a192"/>
<ellipse cx="120" cy="58" rx="52" ry="24" fill="#d8b6a6"/>
<!-- beard/chin -->
<path d="M80 162 Q84 218 128 220 Q172 218 178 162 Q160 195 128 196 Q98 195 80 162 Z" fill="#8a6a60"/>
<!-- hair -->
<path d="M44 120 Q38 60 52 30 Q70 0 130 -2 Q180 6 192 40 Q198 70 194 90 Q186 60 170 48 Q130 22 80 40 Q62 56 60 118 Z" fill="#3a2d24"/>
<path d="M66 -5 H176 Q190 10 190 34 Q140 18 52 36 Q54 10 66 -5 Z" fill="#3a2d24"/>
</g>
<g filter="url(#bl2)">
<!-- brows -->
<path d="M62 80 Q85 64 114 72" stroke="#5a3c2e" stroke-width="7" fill="none"/>
<path d="M144 66 Q168 58 186 76" stroke="#5a3c2e" stroke-width="7" fill="none"/>
<ellipse cx="90" cy="97" rx="13" ry="4" fill="#98827c"/><ellipse cx="158" cy="94" rx="13" ry="4" fill="#98827c"/>
<ellipse cx="125" cy="118" rx="14" ry="9" fill="#b8908a"/>
<circle cx="116" cy="121" r="2.6" fill="#4a2a28"/><circle cx="135" cy="121" r="2.6" fill="#4a2a28"/>
<path d="M92 140 Q125 128 160 140" stroke="#7a5a50" stroke-width="5" fill="none"/>
<path d="M98 150 Q125 140 154 150 Q125 172 98 150 Z" fill="#b58280"/>
<path d="M106 152 H146" stroke="#e6dcd8" stroke-width="3"/>
<!-- headphones -->
<path d="M42 112 Q36 88 46 68" stroke="#2a2a2a" stroke-width="7" fill="none"/>
<rect x="25" y="108" width="31" height="57" rx="13" fill="#1d1d1d"/>
<rect x="27" y="114" width="9" height="44" rx="4" fill="#a3a3a3"/>
<path d="M200 106 Q208 86 194 66" stroke="#2a2a2a" stroke-width="7" fill="none"/>
<rect x="196" y="105" width="30" height="57" rx="13" fill="#1d1d1d"/>
<rect x="215" y="111" width="10" height="44" rx="4" fill="#a3a3a3"/>
<path d="M158 146 L200 137" stroke="#2f2e2a" stroke-width="5.5"/>
<!-- cable -->
<path d="M214 163 V345" stroke="#dc5c68" stroke-width="2"/>
<!-- hand -->
<ellipse cx="212" cy="342" rx="24" ry="18" fill="#cf9c90"/>
</g>
</svg>
<div class="abs" style="left:1655px;top:430px;width:218px;height:27px;border-radius:4px;background:rgba(10,10,14,0.78)"></div>
<div class="abs" style="left:1662px;top:435px;font-size:13.4px;line-height:18px;color:#fff;white-space:nowrap">Олексій Максимович Безчастний</div>
<div class="abs" style="left:1680.5px;top:495.0px;width:78px;height:78px;border-radius:50%;overflow:hidden;box-shadow:0 1px 3px rgba(0,0,0,0.18)"><svg width="78" height="78" viewBox="0 0 78 78"><defs><filter id="f1719534"><feGaussianBlur stdDeviation="1.4"/></filter></defs><g filter="url(#f1719534)"><rect width="78" height="78" fill="#3a1e14"/><rect x="0" y="0" width="8" height="78" fill="#9a8060"/><ellipse cx="44" cy="44" rx="25" ry="31" fill="#d49a86"/><ellipse cx="32" cy="52" rx="7" ry="5" fill="#dd8474"/><ellipse cx="58" cy="52" rx="7" ry="5" fill="#dd8474"/><path d="M10 34 Q26 6 48 6 Q70 8 74 36 Q62 20 46 22 Q28 22 18 38 Z" fill="#351c12"/><rect x="23" y="30" width="19" height="7" rx="2" stroke="#3a2020" stroke-width="1.6" fill="none"/><rect x="46" y="30" width="19" height="7" rx="2" stroke="#3a2020" stroke-width="1.6" fill="none"/><ellipse cx="44" cy="62" rx="8" ry="2.5" fill="#c07870"/><path d="M14 78 L24 58 L38 78 Z" fill="#eef2e6"/><path d="M8 78 L18 66 L24 78 Z" fill="#9cd04a"/></g></svg></div>
<div class="lbl" style="left:1668px;top:583px">Ольга Юрії...</div>
<svg class="abs" style="left:1757px;top:583px" width="14" height="14" viewBox="0 0 14 14"><rect x="4.3" y="1" width="5.4" height="8.4" rx="2.7" fill="#2e2e2e"/><path d="M2.4 6.6 Q2.4 11 7 11 Q11.6 11 11.6 6.6 M7 11 V13.6" stroke="#2e2e2e" stroke-width="1.2" fill="none"/><path d="M1 0.6 L13 13.4" stroke="#f5f5f5" stroke-width="2.4"/><path d="M1 0.6 L13 13.4" stroke="#2e2e2e" stroke-width="1.2"/></svg>
<div class="abs" style="left:1803.0px;top:495.0px;width:78px;height:78px;border-radius:50%;overflow:hidden;box-shadow:0 1px 3px rgba(0,0,0,0.18)"><svg width="78" height="78" viewBox="0 0 78 78"><defs><filter id="f1842534"><feGaussianBlur stdDeviation="1.4"/></filter></defs><g filter="url(#f1842534)"><rect width="78" height="78" fill="#7a7470"/><rect x="0" y="0" width="6" height="78" fill="#d8d4cc"/><rect x="6" y="0" width="12" height="78" fill="#5c5854"/><path d="M14 12 Q36 -6 62 8 Q76 36 74 72 L8 72 Q4 36 14 12 Z" fill="#2c2420"/><ellipse cx="40" cy="30" rx="16" ry="21" fill="#dcaa96"/><path d="M26 24 H54" stroke="#c8bca8" stroke-width="3"/><path d="M6 78 Q12 54 40 50 Q66 54 72 78 Z" fill="#f4f4f2"/><path d="M36 58 L40 70 L44 58" stroke="#bbb" stroke-width="1" fill="none"/></g></svg></div>
<div class="lbl" style="left:1790.5px;top:583px">Валентина ...</div>
<svg class="abs" style="left:1878.5px;top:583px" width="14" height="14" viewBox="0 0 14 14"><rect x="4.3" y="1" width="5.4" height="8.4" rx="2.7" fill="#2e2e2e"/><path d="M2.4 6.6 Q2.4 11 7 11 Q11.6 11 11.6 6.6 M7 11 V13.6" stroke="#2e2e2e" stroke-width="1.2" fill="none"/><path d="M1 0.6 L13 13.4" stroke="#f5f5f5" stroke-width="2.4"/><path d="M1 0.6 L13 13.4" stroke="#2e2e2e" stroke-width="1.2"/></svg>
<div class="abs" style="left:1680.5px;top:617px;width:78px;height:78px;border-radius:50%;background:#dae5ec;box-shadow:0 1px 3px rgba(0,0,0,0.12)"></div>
<div class="abs" style="left:1680.5px;top:638px;width:78px;text-align:center;font-size:30.5px;line-height:36px;color:#1f4450;letter-spacing:-1px;-webkit-text-stroke:0.7px #1f4450">OT</div>
<div class="lbl" style="left:1668px;top:705px">Ольга Мик...</div>
<svg class="abs" style="left:1757px;top:705px" width="14" height="14" viewBox="0 0 14 14"><rect x="4.3" y="1" width="5.4" height="8.4" rx="2.7" fill="#2e2e2e"/><path d="M2.4 6.6 Q2.4 11 7 11 Q11.6 11 11.6 6.6 M7 11 V13.6" stroke="#2e2e2e" stroke-width="1.2" fill="none"/><path d="M1 0.6 L13 13.4" stroke="#f5f5f5" stroke-width="2.4"/><path d="M1 0.6 L13 13.4" stroke="#2e2e2e" stroke-width="1.2"/></svg>
<div class="abs" style="left:1803.0px;top:617.0px;width:78px;height:78px;border-radius:50%;overflow:hidden;box-shadow:0 1px 3px rgba(0,0,0,0.18)"><svg width="78" height="78" viewBox="0 0 78 78"><defs><filter id="f1842656"><feGaussianBlur stdDeviation="1.4"/></filter></defs><g filter="url(#f1842656)"><rect width="78" height="78" fill="#c3c5c8"/><rect x="58" y="0" width="20" height="78" fill="#a9aeb3"/><path d="M4 70 Q0 14 40 6 Q72 8 70 56 L62 74 Z" fill="#7a4628"/><ellipse cx="43" cy="36" rx="14" ry="21" fill="#d9a48c"/><path d="M28 26 Q42 12 58 24 L58 14 Q42 4 26 16 Z" fill="#7a4628"/><path d="M8 78 Q14 60 42 58 Q68 60 74 78 Z" fill="#6c6c6e"/></g></svg></div>
<div class="lbl" style="left:1790.5px;top:705px">Наталія Єв...</div>
<svg class="abs" style="left:1878.5px;top:705px" width="14" height="14" viewBox="0 0 14 14"><rect x="4.3" y="1" width="5.4" height="8.4" rx="2.7" fill="#2e2e2e"/><path d="M2.4 6.6 Q2.4 11 7 11 Q11.6 11 11.6 6.6 M7 11 V13.6" stroke="#2e2e2e" stroke-width="1.2" fill="none"/><path d="M1 0.6 L13 13.4" stroke="#f5f5f5" stroke-width="2.4"/><path d="M1 0.6 L13 13.4" stroke="#2e2e2e" stroke-width="1.2"/></svg>
<div class="abs" style="left:1680.5px;top:738.5px;width:78px;height:78px;border-radius:50%;overflow:hidden;box-shadow:0 1px 3px rgba(0,0,0,0.18)"><svg width="78" height="78" viewBox="0 0 78 78"><defs><filter id="f1719777"><feGaussianBlur stdDeviation="1.4"/></filter></defs><g filter="url(#f1719777)"><rect width="78" height="78" fill="#52703c"/><rect x="0" y="0" width="78" height="22" fill="#4f8fe0"/><rect x="0" y="14" width="78" height="8" fill="#9cc4ee"/><path d="M40 24 L62 10 L80 14 V30 H40 Z" fill="#4a6646"/><rect x="14" y="17" width="18" height="8" fill="#e4e4e2"/><rect x="17" y="5" width="5" height="13" fill="#8aa0b8"/><rect x="31" y="9" width="29" height="12" fill="#2f5fb0"/><rect x="58" y="20" width="2" height="30" fill="#d8d8d8"/><path d="M0 36 L80 50 V80 H40 L0 40 Z" fill="#5e5c56"/><path d="M0 40 L24 46 V80 H0 Z" fill="#3e5a2e"/><rect x="23" y="22" width="14" height="36" fill="#cdc8c0"/><rect x="15" y="57" width="30" height="15" fill="#8e8276"/><ellipse cx="49" cy="51" rx="7.5" ry="11" fill="#e8e8e4"/><rect x="44" y="61" width="10" height="17" fill="#223666"/><circle cx="49.5" cy="38" r="3.6" fill="#b0603c"/></g></svg></div>
<div class="lbl" style="left:1668px;top:827.5px">Ірина Вікт...</div>
<svg class="abs" style="left:1757px;top:827.5px" width="14" height="14" viewBox="0 0 14 14"><rect x="4.3" y="1" width="5.4" height="8.4" rx="2.7" fill="#2e2e2e"/><path d="M2.4 6.6 Q2.4 11 7 11 Q11.6 11 11.6 6.6 M7 11 V13.6" stroke="#2e2e2e" stroke-width="1.2" fill="none"/><path d="M1 0.6 L13 13.4" stroke="#f5f5f5" stroke-width="2.4"/><path d="M1 0.6 L13 13.4" stroke="#2e2e2e" stroke-width="1.2"/></svg>
<div class="abs" style="left:1802.5px;top:738.5px;width:78px;height:78px;border-radius:50%;background:#fff;border:1px solid #d1d1d1"></div>
<svg class="abs" style="left:1826px;top:773px" width="32" height="10"><circle cx="6.5" cy="5" r="2.3" fill="#242424"/><circle cx="15.7" cy="5" r="2.3" fill="#242424"/><circle cx="24.5" cy="5" r="2.3" fill="#242424"/></svg>
<div class="lbl" style="left:1790.5px;top:827.5px">Переглянути в...</div>
<div class="abs" style="left:1646px;top:877px;width:269px;height:148px;background:#e6e6e6"></div>
<div class="abs" style="left:1750px;top:920px;width:62px;height:62px;border-radius:50%;overflow:hidden"><svg width="62" height="62" viewBox="0 0 62 62"><defs><filter id="fsv"><feGaussianBlur stdDeviation="1.2"/></filter></defs><g filter="url(#fsv)">
<rect width="62" height="62" fill="#e6e6e6"/><rect x="0" y="0" width="17" height="62" fill="#cdd6e2"/><path d="M12 62 Q8 16 24 4 Q40 -4 56 8 Q66 30 62 62 Z" fill="#d9c6a2"/><ellipse cx="37" cy="36" rx="17" ry="26" fill="#dbb79c"/><path d="M22 12 Q36 0 54 10 L52 16 Q38 6 24 18 Z" fill="#a48e78"/><path d="M18 20 Q16 44 26 62" stroke="#6a5a48" stroke-width="2.2" fill="none"/><ellipse cx="30" cy="29" rx="4" ry="1.6" fill="#8a6e5c"/><ellipse cx="45" cy="28" rx="4" ry="1.6" fill="#8a6e5c"/><path d="M32 44 Q38 42 44 44" stroke="#a8786a" stroke-width="1.5" fill="none"/></g></svg></div>
</body></html>
